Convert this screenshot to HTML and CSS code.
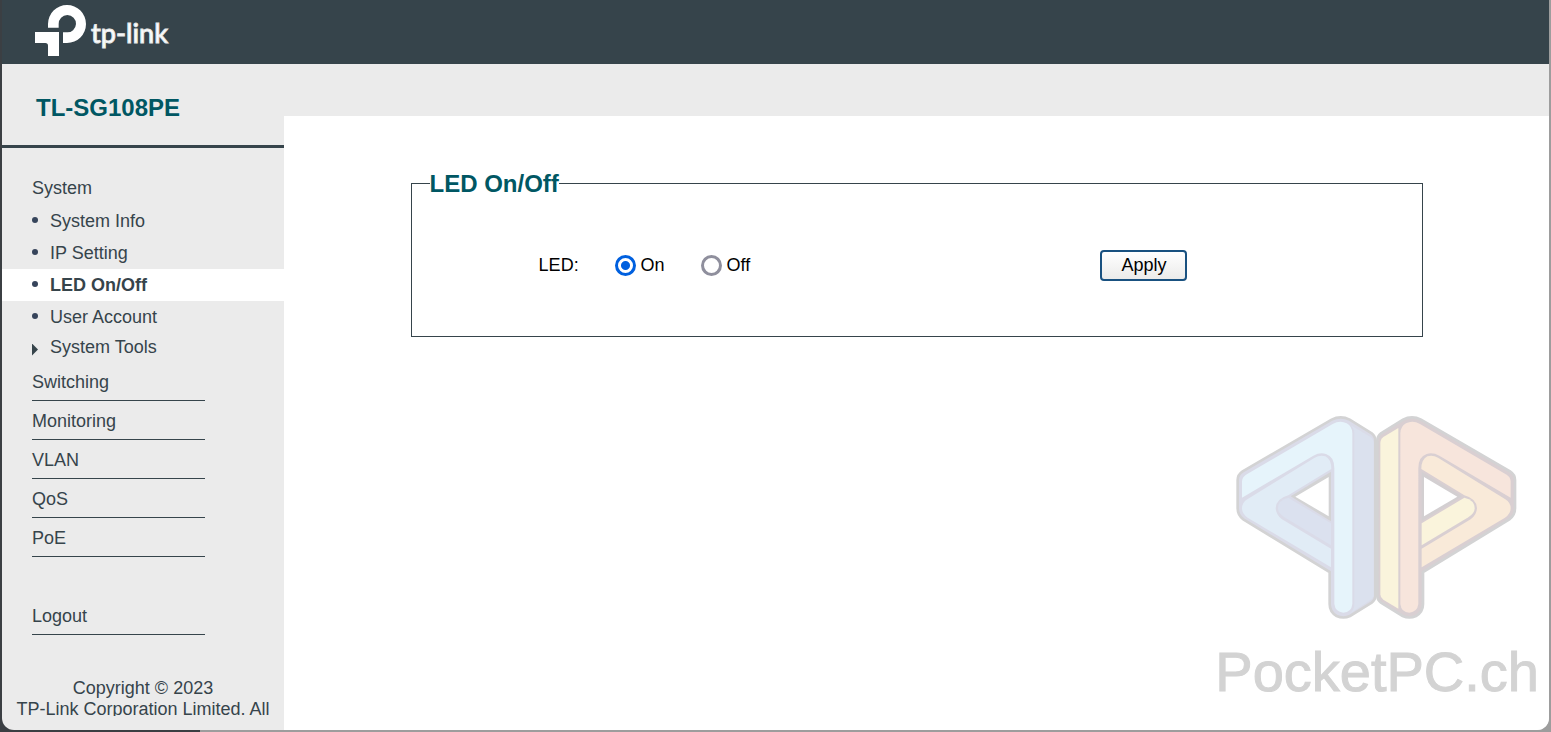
FILE: index.html
```html
<!DOCTYPE html>
<html lang="en">
<head>
<meta charset="utf-8">
<title>TL-SG108PE</title>
<link rel="stylesheet" href="styles.css">
</head>
<body>
<div class="window">
  <header class="topbar">
    <a class="brand" href="#" aria-label="tp-link">
      <svg class="brand-mark" viewBox="105 15 153 153" aria-hidden="true">
        <path d="M144 83V72A57 57 0 0 1 258 72A57 57 0 0 1 201 129H189V97H200A26 26 0 1 0 176 72V83Z"/>
        <path d="M105 96H177V168H144V137Q144 129 136 129H105Z"/>
      </svg>
      <span class="brand-name">tp-link</span>
    </a>
  </header>
  <div class="layout">
    <aside class="sidebar">
      <h1 class="model">TL-SG108PE</h1>
      <nav class="menu">
        <a class="menu-head" href="#">System</a>
        <ul class="submenu">
          <li><a class="sub" href="#">System Info</a></li>
          <li><a class="sub" href="#">IP Setting</a></li>
          <li><a class="sub sub-active" href="#">LED On/Off</a></li>
          <li><a class="sub" href="#">User Account</a></li>
          <li><a class="sub sub-closed" href="#">System Tools</a></li>
        </ul>
        <a class="group" href="#">Switching</a>
        <a class="group" href="#">Monitoring</a>
        <a class="group" href="#">VLAN</a>
        <a class="group" href="#">QoS</a>
        <a class="group" href="#">PoE</a>
        <a class="group group-last" href="#">Logout</a>
      </nav>
      <p class="copyright">Copyright © 2023<br>TP-Link Corporation Limited. All</p>
    </aside>
    <main class="content">
      <form>
        <fieldset class="panel">
          <legend>LED On/Off</legend>
          <div class="row">
            <span class="row-label">LED:</span>
            <label class="choice"><input type="radio" name="led" checked>On</label>
            <label class="choice"><input type="radio" name="led">Off</label>
            <button class="apply" type="button">Apply</button>
          </div>
        </fieldset>
      </form>
    </main>
  </div>
  <div class="watermark">
    <svg class="watermark-logo" viewBox="45 45 849 615" aria-hidden="true">
      <g>
        <path fill="#dadbe8" stroke="#d3d3d4" stroke-width="8" d="M335 59Q362 45 389 59L455 100Q466 108 466 122V588Q466 600 455 608L390 648Q370 657 350 648Q329 636 329 612V516L70 358Q53 346 53 325V240Q53 224 68 214Z"/>
        <path fill="#dbe1ee" d="M391 75L452 111Q461 118 461 130V585Q461 595 452 600L391 640Q403 628 403 612V100Q403 86 391 75Z"/>
        <path fill="#e6f4fb" d="M66 293V245Q66 232 78 224L338 72Q360 60 380 70Q397 80 397 100V612Q394 638 370 638Q346 636 343 612V205Q343 170 318 162Q300 156 280 167Z"/>
        <path fill="#e1ecf6" d="M66 325Q66 308 82 298L284 173Q300 164 316 169Q334 178 334 207L205 286Q168 296 167 325Q168 345 186 358L333 446V502L83 353Q66 342 66 325Z"/>
        <path fill="#dbe1ef" d="M205 293L333 370V436L193 352Q174 340 174 325Q174 300 205 293Z"/>
        <path fill="#d3d3d4" d="M212 289L333 215V364Z"/>
        <path fill="#fff" d="M226 290L326 231V349Z"/>
      </g>
      <g transform="translate(938 0) scale(-1 1)">
        <path fill="#d9cfd2" stroke="#d3d3d4" stroke-width="8" d="M335 59Q362 45 389 59L455 100Q466 108 466 122V588Q466 600 455 608L390 648Q370 657 350 648Q329 636 329 612V516L70 358Q53 346 53 325V240Q53 224 68 214Z"/>
        <path fill="#faf4dc" d="M403 84L448 111Q457 118 457 130V583Q457 593 448 599L403 626Z"/>
        <path fill="#f7e5dc" d="M66 293V245Q66 232 78 224L338 72Q360 60 380 70Q397 80 397 100V612Q394 638 370 638Q346 636 343 612V205Q343 170 318 162Q300 156 280 167Z"/>
        <path fill="#f9ead9" d="M66 325Q66 308 82 298L284 173Q300 164 316 169Q334 178 334 207L205 286Q168 296 167 325Q168 345 186 358L333 446V502L83 353Q66 342 66 325Z"/>
        <path fill="#faf4dc" d="M205 293L333 370V436L193 352Q174 340 174 325Q174 300 205 293Z"/>
        <path fill="#d3cfd1" d="M212 289L333 215V364Z"/>
        <path fill="#fff" d="M226 290L326 231V349Z"/>
      </g>
    </svg>
    <span class="watermark-text">PocketPC.ch</span>
  </div>
</div>
</body>
</html>
```
FILE: styles.css
```css
* {
  box-sizing: border-box;
}

body {
  margin: 0;
  padding: 0 2px 2px;
  height: 100vh;
  overflow: hidden;
  background: linear-gradient(90deg, #3b3f43 200px, #9d9d9d 200px);
  font: 18px/21px "Liberation Sans", Arial, sans-serif;
  color: #000;
}

a {
  color: #36444b;
  text-decoration: none;
}

.window {
  position: relative;
  display: flex;
  flex-direction: column;
  height: 100%;
  overflow: hidden;
  background: #ebebeb;
  border-radius: 0 0 12px 12px;
}

.topbar {
  flex: none;
  height: 64px;
  padding: 5px 33px;
  background: #36444b;
}

.brand {
  display: inline-flex;
  align-items: center;
  gap: 5px;
  color: #fff;
}

.brand-mark {
  width: 51px;
  height: 51px;
  fill: #fff;
}

.brand-name {
  padding-top: 4px;
  font: 500 27px/32px Lato, sans-serif;
  -webkit-text-stroke: 1px #e6e8e9;
}

.layout {
  flex: 1;
  display: flex;
  min-height: 0;
}

.sidebar {
  flex: none;
  width: 282px;
}

.model {
  height: 84px;
  margin: 0;
  padding: 30px 34px 0;
  border-bottom: 3px solid #36444b;
  font-size: 24px;
  line-height: 28px;
  color: #005763;
}

.menu {
  padding-top: 24px;
}

.menu-head {
  display: block;
  padding: 6px 30px;
}

.submenu {
  margin: 0;
  padding: 0;
  list-style: none;
}

.sub {
  display: flex;
  align-items: center;
  height: 32px;
  padding-left: 30px;
}

.sub::before {
  content: "";
  width: 6px;
  height: 6px;
  margin: 0 12px 2px 0;
  border-radius: 50%;
  background: #36445b;
}

.sub-active {
  background: #fff;
  font-weight: bold;
}

.sub-closed {
  height: 29px;
}

.sub-closed::before {
  height: 12px;
  margin: 4px 12px 0 0;
  border-radius: 0;
  background: #36444b;
  clip-path: polygon(0 0, 100% 50%, 0 100%);
}

.group {
  display: block;
  width: 173px;
  height: 39px;
  margin-left: 30px;
  padding-top: 10px;
  border-bottom: 1px solid #36444b;
}

.group-last {
  margin-top: 39px;
}

.copyright {
  height: 38px;
  margin: 43px 0 0;
  overflow: hidden;
  text-align: center;
  white-space: nowrap;
  color: #36444b;
}

.content {
  flex: 1;
  margin-top: 52px;
  padding-top: 54px;
  background: #fff;
}

.panel {
  width: 80%;
  margin: 0 auto;
  padding: 53px 0 55px 18px;
  border: 1px solid #36444b;
}

.panel legend {
  padding: 0;
  font-size: 24px;
  line-height: 27px;
  font-weight: bold;
  color: #005763;
}

.row {
  display: flex;
  align-items: center;
  padding: 0 23.6% 0 11%;
}

.row-label {
  width: 76px;
}

.choice {
  display: flex;
  align-items: center;
  gap: 5px;
  width: 86px;
}

.choice input {
  appearance: none;
  width: 21px;
  height: 21px;
  margin: 0;
  border: 3px solid #8f8f9d;
  border-radius: 50%;
  background: #fff;
}

.choice input:checked {
  border-color: #0060df;
  background: radial-gradient(circle, #0060df 4px, #fff 5px);
}

.apply {
  width: 87px;
  height: 31px;
  margin-left: auto;
  padding: 0;
  border: 2px solid #195180;
  border-radius: 4px;
  background: linear-gradient(#fff, #ebebea);
  font: inherit;
  color: #000;
}

.watermark {
  position: absolute;
  right: 10px;
  bottom: 26px;
  display: flex;
  flex-direction: column;
  align-items: center;
  pointer-events: none;
}

.watermark-logo {
  width: 283px;
  height: 205px;
  margin-right: 2px;
}

.watermark-text {
  margin-top: 20px;
  font-size: 56px;
  line-height: 64px;
  color: #d3d3d3;
  -webkit-text-stroke: 1px #d3d3d3;
}
```
